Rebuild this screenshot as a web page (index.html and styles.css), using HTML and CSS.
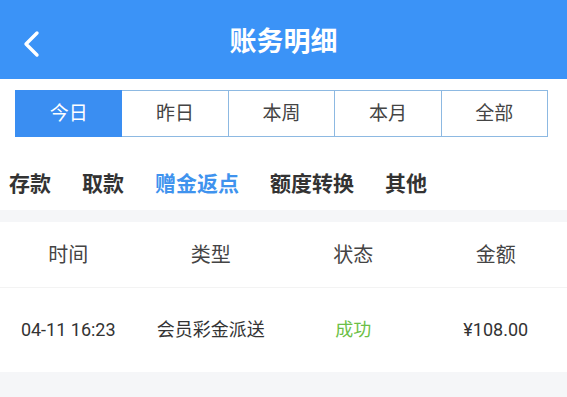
FILE: index.html
```html
<!DOCTYPE html>
<html lang="zh-CN">
<head>
<meta charset="UTF-8">
<title>账务明细</title>
<meta name="viewport" content="width=device-width, initial-scale=1">
<link rel="stylesheet" href="styles.css">
</head>
<body>

<header class="topbar">
  <a class="back" href="#">
    <svg width="18" height="28" viewBox="0 0 18 28"><path d="M15 3 L4 14 L15 25" fill="none" stroke="#fff" stroke-width="3.4" stroke-linecap="round" stroke-linejoin="round"/></svg>
  </a>
  <h1>账务明细</h1>
</header>

<div class="period">
  <div class="period-item active">今日</div>
  <div class="period-item">昨日</div>
  <div class="period-item">本周</div>
  <div class="period-item">本月</div>
  <div class="period-item">全部</div>
</div>

<nav class="types">
  <span>存款</span>
  <span>取款</span>
  <span class="on">赠金返点</span>
  <span>额度转换</span>
  <span>其他</span>
</nav>

<div class="gap"></div>

<section class="list">
  <div class="row head">
    <div>时间</div>
    <div>类型</div>
    <div>状态</div>
    <div>金额</div>
  </div>
  <div class="row item">
    <div>04-11 16:23</div>
    <div>会员彩金派送</div>
    <div class="ok">成功</div>
    <div>¥108.00</div>
  </div>
</section>

</body>
</html>
```

FILE: styles.css
```css
body { margin: 0; background: #f5f6f8; font-family: Roboto, "Noto Sans CJK SC", sans-serif; color: #333; }
.topbar { background: #3b93f7; height: 79px; display: flex; align-items: center; justify-content: center; position: relative; }
.topbar h1 { margin: 0; color: #fff; font-size: 27px; font-weight: bold; line-height: 32px; margin-top: 4px; }
.back { position: absolute; left: 22px; top: 30px; display: block; width: 18px; height: 28px; }

.period { background: #fff; display: flex; padding: 11px 19px 0 15px; }
.period-item { flex: 1; height: 45px; line-height: 45px; text-align: center; font-size: 19px; color: #444; border: 1px solid #8db9e2; border-left: none; background: #fff; }
.period-item:first-child { border-left: 1px solid #8db9e2; }
.period-item.active { background: #3a8ef2; color: #fff; border-color: #3a8ef2; }

.types { background: #fff; display: flex; gap: 31px; padding: 35px 0 13px 9px; font-size: 21px; font-weight: bold; line-height: 25px; color: #333; }
.types .on { color: #3f93ee; }

.gap { height: 12px; }

.list { background: #fff; }
.row { display: grid; grid-template-columns: repeat(4, 1fr); margin-left: -3px; text-align: center; }
.row.head { height: 65px; line-height: 66px; font-size: 20px; color: #444; border-bottom: 1px solid #f3f3f3; }
.row.item { height: 84px; line-height: 84px; font-size: 18px; color: #333; }
.ok { color: #6cbf47; }
```
